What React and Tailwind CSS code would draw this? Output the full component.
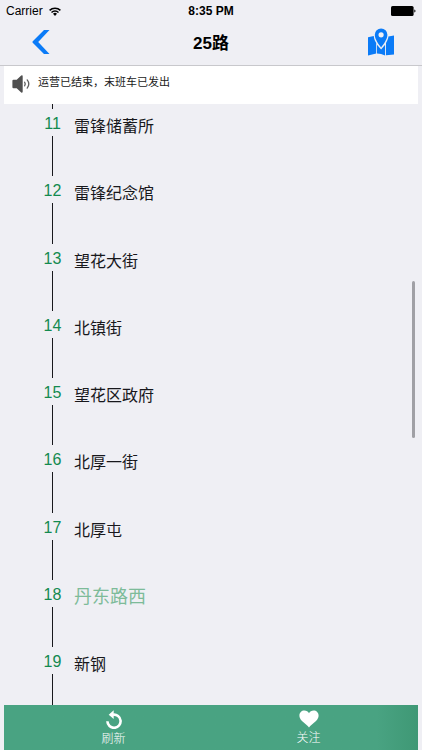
import * as React from "react"
import { clsx } from "clsx"

const stations = [
  { no: 11, name: "雷锋储蓄所" },
  { no: 12, name: "雷锋纪念馆" },
  { no: 13, name: "望花大街" },
  { no: 14, name: "北镇街" },
  { no: 15, name: "望花区政府" },
  { no: 16, name: "北厚一街" },
  { no: 17, name: "北厚屯" },
  { no: 18, name: "丹东路西", active: true },
  { no: 19, name: "新钢" },
]

const WifiIcon = () => (
  <svg viewBox="0 0 12 9" className="h-[9px] w-3" aria-hidden="true">
    <path d="M.6 3.4a7.6 7.6 0 0 1 10.8 0" fill="none" stroke="black" strokeWidth="1.5" />
    <path d="M2.5 5.4a4.9 4.9 0 0 1 7 0" fill="none" stroke="black" strokeWidth="1.4" />
    <path d="M4 6.8a2.9 2.9 0 0 1 4 0L6 8.9z" />
  </svg>
)

const BatteryIcon = () => (
  <svg viewBox="0 0 25 10" className="h-[10px] w-[25px]" aria-hidden="true">
    <rect width="22.6" height="10" rx="1.6" />
    <path d="M23.3 3.4c1.6.4 1.6 2.8 0 3.2z" />
  </svg>
)

const BackIcon = () => (
  <svg viewBox="0 0 18 24" className="h-6 w-[18px]" fill="currentColor" aria-hidden="true">
    <path d="M12 0h5.5L6.2 12l11.3 12H12L.5 12.4v-.8z" />
  </svg>
)

const MapIcon = () => (
  <svg viewBox="0 0 26 28" className="h-7 w-[26px]" fill="currentColor" aria-hidden="true">
    <path d="M0 9.2 5.8 8c.1 3 1.3 5.2 2.4 6.9v10.7L0 27.5z" />
    <path d="M9 16.8l4.1 4.6 4-4.6v10.6l-4-1.4-4.1-.4z" />
    <path d="M26 7.4v19.2l-8 .7V14.9c1.3-2.1 2.4-4.3 2.4-6.3z" />
    <path
      fillRule="evenodd"
      d="M13.1.5a6.3 6.3 0 0 1 6.3 6.3c0 4.5-3.8 9.3-6.3 12.7-2.5-3.4-6.3-8.2-6.3-12.7A6.3 6.3 0 0 1 13.1.5zm0 3.7a2.6 2.6 0 1 0 0 5.2 2.6 2.6 0 0 0 0-5.2z"
    />
  </svg>
)

const SpeakerIcon = () => (
  <svg viewBox="0 0 18 18" className="size-[18px]" aria-hidden="true">
    <path
      d="M1.5 4.8h3.2L9.2.6q1.5-.8 1.5.8v15.2q0 1.6-1.5.8l-4.5-4.2H1.5Q.4 13.2.4 12.2V5.8q0-1 1.1-1z"
      fill="#505050"
    />
    <g fill="none" stroke="#5f5f5f" strokeWidth="1.3" strokeLinecap="round">
      <path d="M12.6 7.2q1.3 1.8 0 3.6" />
      <path d="M15.2 4.9q3.2 4.1 0 8.2" />
    </g>
  </svg>
)

const RefreshIcon = () => (
  <svg viewBox="0 0 18 19" className="h-[19px] w-[18px]" aria-hidden="true">
    <path d="M2.4 11.3A6.6 6.6 0 1 0 8 4.7" fill="none" stroke="white" strokeWidth="2.6" />
    <path d="M8.7.3v8.8L3.7 4.7z" fill="white" />
  </svg>
)

const HeartIcon = () => (
  <svg viewBox="0 0 20 18" className="h-[18px] w-5" aria-hidden="true">
    <path
      d="M10 17.6C8.8 15.6 5.6 13.6 3 11 1.3 9.4.4 7.6.4 5.6.4 2.7 2.6.6 5.4.6c2 0 3.7 1 4.6 2.6C10.9 1.600 12.6.6 14.6.6c2.8 0 5 2.1 5 5 0 2-.9 3.8-2.6 5.4-2.6 2.6-5.8 4.6-7 6.6z"
      fill="white"
    />
  </svg>
)

const StatusBar = () => (
  <div className="grid h-[22px] grid-cols-3 items-center px-[6px] text-xs">
    <div className="flex items-center gap-[6px]">
      <span>Carrier</span>
      <WifiIcon />
    </div>
    <span className="text-center font-bold">8:35 PM</span>
    <div className="flex justify-end">
      <BatteryIcon />
    </div>
  </div>
)

const NavBar = () => (
  <header className="grid h-11 grid-cols-3 items-center border-b border-[#c8c8cc] px-7">
    <button type="button" aria-label="返回" className="justify-self-start pb-[3px] pl-1 text-[#0b7bf7]">
      <BackIcon />
    </button>
    <h1 className="text-center text-[17px] leading-6 font-semibold">25路</h1>
    <button type="button" aria-label="地图" className="justify-self-end pb-[3px] text-[#0b7bf7]">
      <MapIcon />
    </button>
  </header>
)

const Station = ({ no, name, active = false, last = false }) => (
  <li className={clsx("flex gap-[11px]", last ? "h-[58px]" : "flex-1")}>
    <div className="flex w-[21px] flex-col items-center">
      <span className="h-[27px] text-base leading-[30px] text-[#138a4f]">{no}</span>
      <span className="w-px flex-1 bg-[#18181c]" />
    </div>
    <span
      className={clsx(
        "h-[27px] leading-[35px]",
        active ? "text-lg text-[#7dbb99]" : "text-base text-[#18181c]"
      )}
    >
      {name}
    </span>
  </li>
)

const tabs = [
  { label: "刷新", Icon: RefreshIcon },
  { label: "关注", Icon: HeartIcon },
]

const TabBar = () => (
  <nav className="mx-1 grid h-[45px] grid-cols-2 bg-linear-to-r from-[#49a382] from-90% to-[#3f9875] px-3">
    {tabs.map(({ label, Icon }) => (
      <button
        key={label}
        type="button"
        className="flex flex-col items-center gap-[2px] pt-[5px] text-xs font-light text-white"
      >
        <Icon />
        <span>{label}</span>
      </button>
    ))}
  </nav>
)

export default function App() {
  return (
    <div className="flex min-h-screen flex-col bg-[#efeff4] font-['Liberation_Sans','Noto_Sans_CJK_SC',sans-serif] text-black">
      <StatusBar />
      <NavBar />
      <p className="mx-1 flex h-[38px] gap-2 bg-white pt-[9px] pl-2 text-[11px] leading-[14px] text-[#222222]">
        <SpeakerIcon />
        运营已结束，末班车已发出
      </p>
      <main className="relative flex flex-1 flex-col">
        <ol className="flex flex-1 flex-col pl-[42px]">
          <li aria-hidden="true" className="flex h-[5px] w-[21px] justify-center">
            <span className="w-px bg-[#18181c]" />
          </li>
          {stations.map((station, i) => (
            <Station key={station.no} {...station} last={i === stations.length - 1} />
          ))}
        </ol>
        <div className="absolute top-[177px] right-[7px] h-[157px] w-[3px] rounded-full bg-[#a0a0a5]" />
      </main>
      <TabBar />
    </div>
  )
}
